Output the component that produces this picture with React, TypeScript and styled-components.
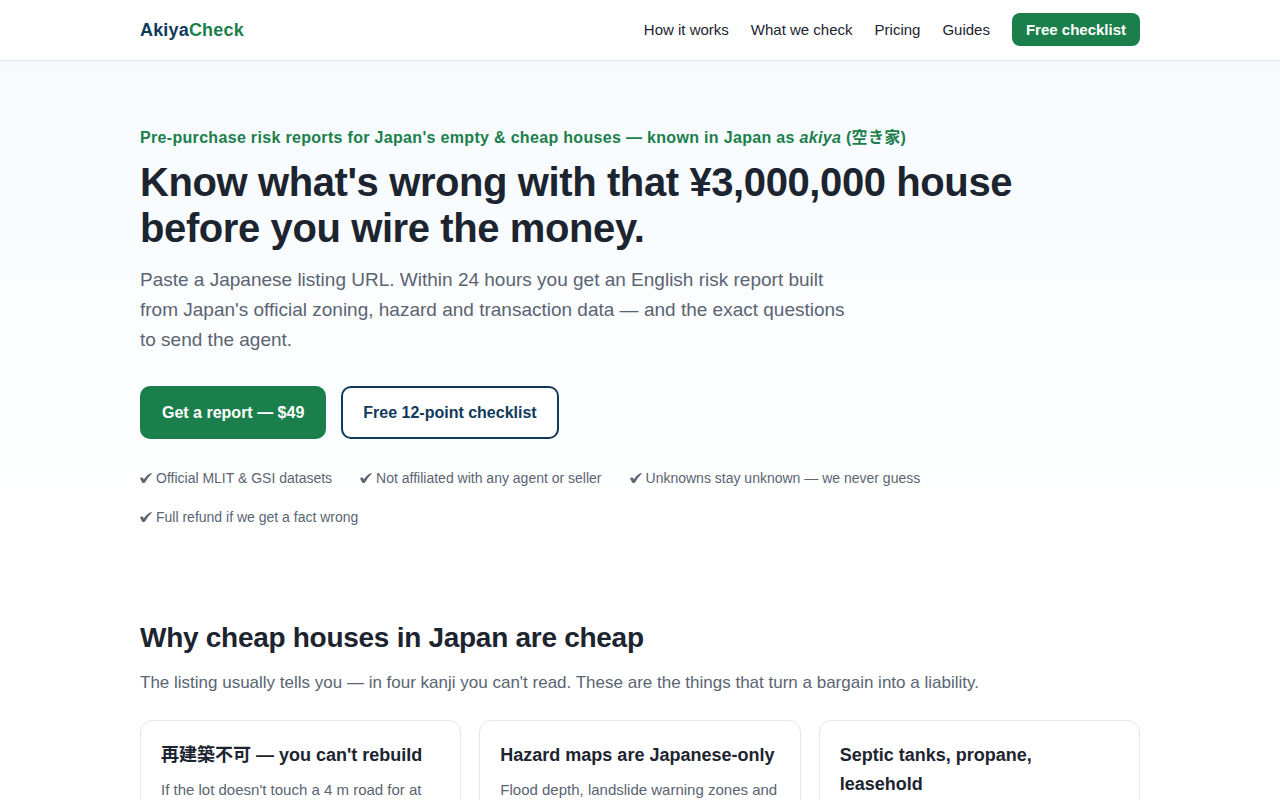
import React from "react";
import styled, { createGlobalStyle } from "styled-components";

const color = {
  ink: "#1c2430",
  muted: "#5a6472",
  navy: "#0f3a5c",
  green: "#1b7f4b",
  headerLine: "#dfe7ee",
  cardLine: "#e5e8eb",
};

const GlobalStyle = createGlobalStyle`
  *, *::before, *::after { box-sizing: border-box; }
  body {
    margin: 0;
    background: #fff;
    color: ${color.ink};
    font-family: "Liberation Sans", Arial, "Noto Sans CJK JP", sans-serif;
    font-size: 17px;
    line-height: 27px;
  }
  h1, h2, h3, p, ul { margin: 0; padding: 0; }
`;

const Container = styled.div`
  width: 100%;
  max-width: 1040px;
  margin: 0 auto;
  padding: 0 20px;
`;

const Header = styled.header`
  background: #fff;
  border-bottom: 1px solid ${color.headerLine};
`;

const HeaderRow = styled(Container)`
  display: flex;
  align-items: center;
  justify-content: space-between;
  padding-top: 13px;
  padding-bottom: 14px;
`;

const Brand = styled.a`
  color: ${color.navy};
  font-size: 18px;
  font-weight: 700;
  line-height: 28px;
  letter-spacing: 0.01em;
  text-decoration: none;

  span { color: ${color.green}; }
`;

const Nav = styled.nav`
  display: flex;
  flex-wrap: wrap;
  align-items: center;
  gap: 22px;
  font-size: 15px;
`;

const NavLink = styled.a`
  color: ${color.ink};
  text-decoration: none;
`;

const NavButton = styled.a`
  padding: 4px 14px;
  border-radius: 8px;
  background: ${color.green};
  color: #fff;
  font-weight: 700;
  line-height: 25px;
  text-decoration: none;
`;

const Hero = styled.section`
  padding: 64px 0;
  background: linear-gradient(180deg, #f6fafd 0%, #fff 90%);
`;

const Eyebrow = styled.p`
  color: ${color.green};
  font-size: 16px;
  font-weight: 700;
  line-height: 26px;
  letter-spacing: 0.02em;
`;

const Title = styled.h1`
  max-width: 900px;
  margin-top: 8px;
  font-size: 40px;
  line-height: 46px;
  letter-spacing: -0.01em;
`;

const Lead = styled.p`
  max-width: 720px;
  margin-top: 14px;
  color: ${color.muted};
  font-size: 19px;
  line-height: 30px;
`;

const Actions = styled.div`
  display: flex;
  flex-wrap: wrap;
  gap: 15px;
  margin-top: 31px;
`;

const ActionLink = styled.a<{ $outline?: boolean }>`
  padding: 12px 20px;
  border: 2px solid ${(p) => (p.$outline ? color.navy : color.green)};
  border-radius: 10px;
  background: ${(p) => (p.$outline ? "#fff" : color.green)};
  color: ${(p) => (p.$outline ? color.navy : "#fff")};
  font-size: 16px;
  font-weight: 700;
  line-height: 25px;
  text-decoration: none;
`;

const TrustList = styled.ul`
  display: flex;
  flex-wrap: wrap;
  gap: 16px 28px;
  margin-top: 28px;
  color: ${color.muted};
  font-size: 14px;
  line-height: 23px;
  list-style: none;
`;

const TrustItem = styled.li`
  display: flex;
  align-items: center;
  gap: 4px;
`;

const TickIcon = styled.svg`
  width: 12px;
  height: 12px;
  fill: currentColor;
`;

const Tick = () => (
  <TickIcon viewBox="0 0 12 12" aria-hidden="true">
    <path d="M0 5.6C0.5 4.6 2 4.1 2.8 4.7C3.3 5.1 3.5 5.8 3.8 6.5C5.6 3.6 8.2 1 11.3 0L12 0.6C9.6 2.8 7.3 5.8 5.4 9C4.7 10 2.9 10.4 2.1 9.6C1.4 8.6 1 6.8 0 5.6Z" />
  </TickIcon>
);

const Section = styled.section`
  padding: 28px 0 56px;
`;

const SectionTitle = styled.h2`
  font-size: 28px;
  line-height: 34px;
  letter-spacing: -0.01em;
`;

const SectionText = styled.p`
  margin-top: 14px;
  color: ${color.muted};
`;

const CardGrid = styled.div`
  display: grid;
  grid-template-columns: repeat(auto-fit, minmax(260px, 1fr));
  gap: 18px;
  margin-top: 24px;
`;

const Card = styled.article`
  padding: 20px;
  border: 1px solid ${color.cardLine};
  border-radius: 12px;
  background: #fff;
`;

const CardTitle = styled.h3`
  font-size: 18px;
  line-height: 29px;
`;

const CardText = styled.p`
  margin-top: 8px;
  color: ${color.muted};
  font-size: 15px;
  line-height: 24px;
`;

const links = ["How it works", "What we check", "Pricing", "Guides"];

const trust = [
  "Official MLIT & GSI datasets",
  "Not affiliated with any agent or seller",
  "Unknowns stay unknown — we never guess",
  "Full refund if we get a fact wrong",
];

const cards: { title: string; text?: string }[] = [
  {
    title: "再建築不可 — you can't rebuild",
    text: "If the lot doesn't touch a 4 m road for at",
  },
  {
    title: "Hazard maps are Japanese-only",
    text: "Flood depth, landslide warning zones and",
  },
  { title: "Septic tanks, propane, leasehold" },
];

export default function App() {
  return (
    <>
      <GlobalStyle />
      <Header>
        <HeaderRow>
          <Brand href="#">
            Akiya<span>Check</span>
          </Brand>
          <Nav>
            {links.map((label) => (
              <NavLink key={label} href="#">
                {label}
              </NavLink>
            ))}
            <NavButton href="#">Free checklist</NavButton>
          </Nav>
        </HeaderRow>
      </Header>
      <main>
        <Hero>
          <Container>
            <Eyebrow>
              Pre-purchase risk reports for Japan's empty &amp; cheap houses —
              known in Japan as <em>akiya</em> (<span lang="ja">空き家</span>)
            </Eyebrow>
            <Title>
              Know what's wrong with that ¥3,000,000 house before you wire the
              money.
            </Title>
            <Lead>
              Paste a Japanese listing URL. Within 24 hours you get an English
              risk report built from Japan's official zoning, hazard and
              transaction data — and the exact questions to send the agent.
            </Lead>
            <Actions>
              <ActionLink href="#">Get a report — $49</ActionLink>
              <ActionLink href="#" $outline>
                Free 12-point checklist
              </ActionLink>
            </Actions>
            <TrustList>
              {trust.map((item) => (
                <TrustItem key={item}>
                  <Tick />
                  {item}
                </TrustItem>
              ))}
            </TrustList>
          </Container>
        </Hero>
        <Section>
          <Container>
            <SectionTitle>Why cheap houses in Japan are cheap</SectionTitle>
            <SectionText>
              The listing usually tells you — in four kanji you can't read.
              These are the things that turn a bargain into a liability.
            </SectionText>
            <CardGrid>
              {cards.map((card) => (
                <Card key={card.title}>
                  <CardTitle>{card.title}</CardTitle>
                  {card.text && <CardText>{card.text}</CardText>}
                </Card>
              ))}
            </CardGrid>
          </Container>
        </Section>
      </main>
    </>
  );
}
